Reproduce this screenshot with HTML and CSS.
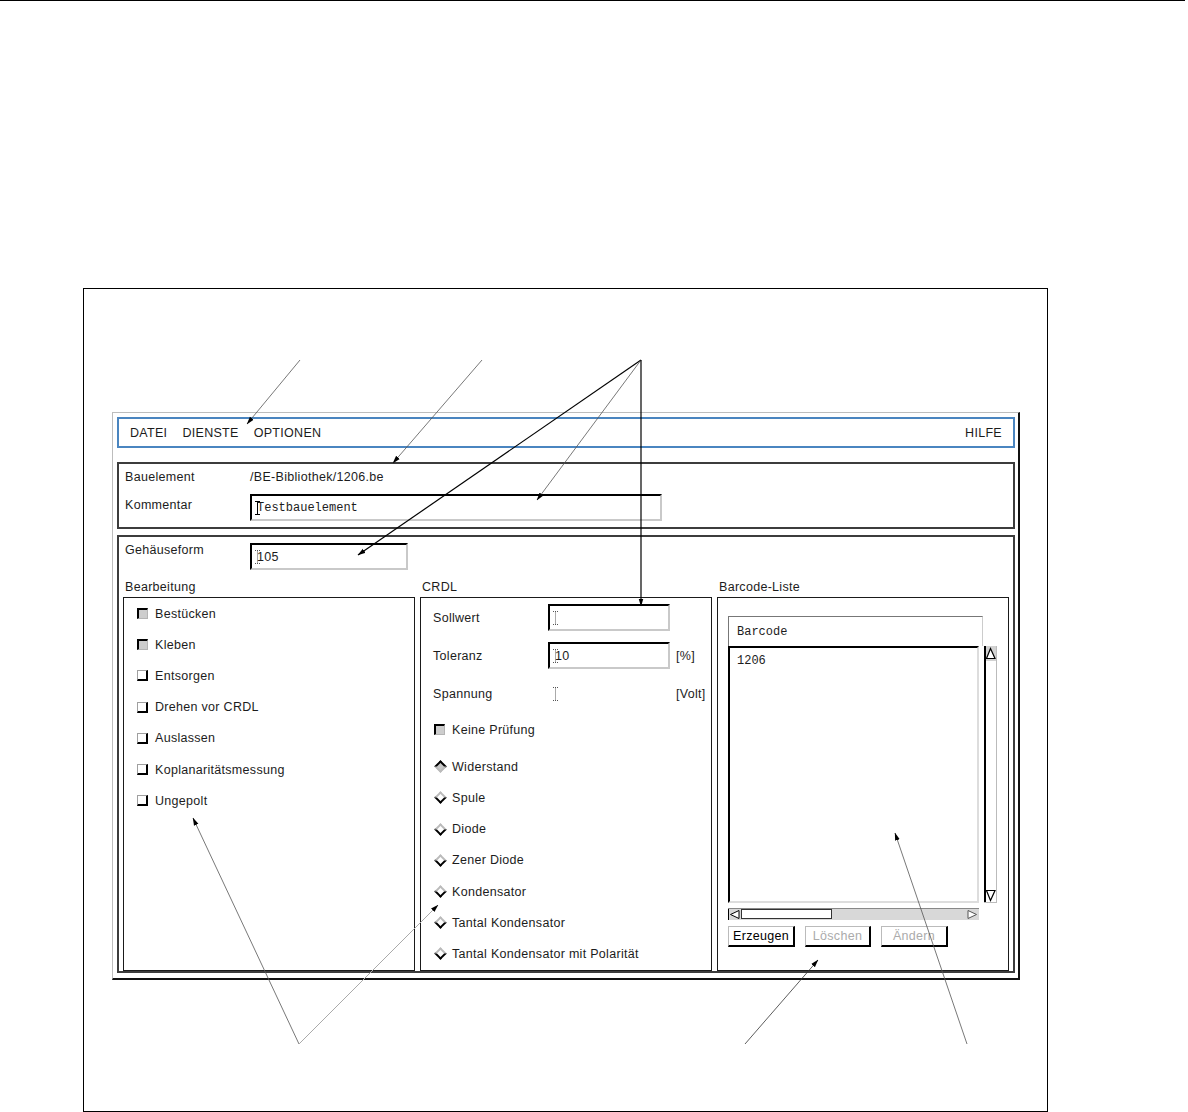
FILE: index.html
```html
<!DOCTYPE html>
<html lang="de">
<head>
  <meta charset="UTF-8" />
  <title>Bauelement bearbeiten</title>
  <link rel="stylesheet" href="styles.css">
</head>
<body>

  <div class="top-rule"></div>

  <div class="figure">
    <div class="window">

      <div class="menubar">
        <span>DATEI</span>
        <span>DIENSTE</span>
        <span>OPTIONEN</span>
        <span class="menu-right">HILFE</span>
      </div>

      <div class="section head">
        <div class="label">Bauelement</div>
        <div class="value">/BE-Bibliothek/1206.be</div>
        <div class="label label-top">Kommentar</div>
        <div class="field field-wide mono">
          <svg class="caret" width="5" height="14" viewBox="0 0 5 14"><path d="M0 0.5H5M2.5 0.5V13.5M0 13.5H5" stroke="#000" stroke-width="1" fill="none"/></svg>Testbauelement
        </div>
      </div>

      <div class="section body">
        <div class="row">
          <div class="label">Gehäuseform</div>
          <div class="field field-short">
            <svg class="caret" width="5" height="14" viewBox="0 0 5 14"><path d="M0 0.5H5M2.5 0.5V13.5M0 13.5H5" stroke="#555" stroke-width="1" stroke-dasharray="1 1" fill="none"/></svg>105
          </div>
        </div>

        <div class="columns">
          <!-- Bearbeitung -->
          <div class="col">
            <div class="col-title">Bearbeitung</div>
            <div class="box">
              <div class="opt"><span class="check on"></span>Bestücken</div>
              <div class="opt"><span class="check on"></span>Kleben</div>
              <div class="opt"><span class="check"></span>Entsorgen</div>
              <div class="opt"><span class="check"></span>Drehen vor CRDL</div>
              <div class="opt"><span class="check"></span>Auslassen</div>
              <div class="opt"><span class="check"></span>Koplanaritätsmessung</div>
              <div class="opt"><span class="check"></span>Ungepolt</div>
            </div>
          </div>

          <!-- CRDL -->
          <div class="col">
            <div class="col-title">CRDL</div>
            <div class="box crdl">
              <div class="crdl-form">
                <div>Sollwert</div>
                <div class="field">
                  <svg class="caret" width="5" height="14" viewBox="0 0 5 14"><path d="M0 0.5H5M2.5 0.5V13.5M0 13.5H5" stroke="#555" stroke-width="1" stroke-dasharray="1 1" fill="none"/></svg>
                </div>
                <div></div>
                <div>Toleranz</div>
                <div class="field">
                  <svg class="caret" width="5" height="14" viewBox="0 0 5 14"><path d="M0 0.5H5M2.5 0.5V13.5M0 13.5H5" stroke="#555" stroke-width="1" stroke-dasharray="1 1" fill="none"/></svg>10
                </div>
                <div>[%]</div>
                <div>Spannung</div>
                <div class="field-bare">
                  <svg class="caret" width="5" height="14" viewBox="0 0 5 14"><path d="M0 0.5H5M2.5 0.5V13.5M0 13.5H5" stroke="#555" stroke-width="1" stroke-dasharray="1 1" fill="none"/></svg>
                </div>
                <div>[Volt]</div>
              </div>
              <div class="opt opt-check"><span class="check on"></span>Keine Prüfung</div>
              <div class="radios">
                <div class="opt opt-radio"><span class="radio on"></span>Widerstand</div>
                <div class="opt opt-radio"><span class="radio"></span>Spule</div>
                <div class="opt opt-radio"><span class="radio"></span>Diode</div>
                <div class="opt opt-radio"><span class="radio"></span>Zener Diode</div>
                <div class="opt opt-radio"><span class="radio"></span>Kondensator</div>
                <div class="opt opt-radio"><span class="radio"></span>Tantal Kondensator</div>
                <div class="opt opt-radio"><span class="radio"></span>Tantal Kondensator mit Polarität</div>
              </div>
            </div>
          </div>

          <!-- Barcode-Liste -->
          <div class="col">
            <div class="col-title">Barcode-Liste</div>
            <div class="box barcode">
              <div class="lb-head mono">Barcode</div>
              <div class="lb-row">
                <div class="lb-list mono">1206</div>
                <svg class="vscroll" width="13" height="257" viewBox="0 0 13 257">
                  <rect x="0" y="0" width="13" height="257" fill="#fff"/>
                  <rect x="0" y="0" width="13" height="15" fill="#d2d2d2"/>
                  <path d="M6.5 2.5 L2.5 12.5 H11 Z" fill="#fff" stroke="#000" stroke-width="1.2"/>
                  <path d="M2.5 244.5 H11 L6.5 254.5 Z" fill="#fff" stroke="#000" stroke-width="1.2"/>
                  <path d="M1 0 V257" stroke="#000" stroke-width="2"/>
                  <path d="M12.5 0 V257 M0 256.5 H13" stroke="#bbb" stroke-width="1"/>
                </svg>
              </div>
              <svg class="hscroll" width="251" height="12" viewBox="0 0 251 12">
                <rect width="251" height="12" fill="#d8d8d8"/>
                <path d="M0 0.5 H251" stroke="#888" stroke-width="1"/>
                <path d="M0.5 1 V12" stroke="#000" stroke-width="1"/>
                <path d="M11 2.5 L2.5 6.5 L11 10.5 Z" fill="#fff" stroke="#000" stroke-width="1"/>
                <rect x="13.5" y="1.5" width="90" height="9" fill="#fff" stroke="#333" stroke-width="1"/>
                <path d="M240 2.5 L248.5 6.5 L240 10.5 Z" fill="#fff" stroke="#555" stroke-width="1"/>
              </svg>
              <div class="buttons">
                <div class="btn btn-a">Erzeugen</div>
                <div class="btn btn-b off">Löschen</div>
                <div class="btn btn-a off">Ändern</div>
              </div>
            </div>
          </div>
        </div>
      </div>

    </div>
  </div>

  <!-- leader lines of the figure -->
  <svg class="leaders" width="1188" height="1112" viewBox="0 0 1188 1112">
    <defs>
      <marker id="ah" markerWidth="8" markerHeight="6" refX="7.5" refY="3" orient="auto" markerUnits="userSpaceOnUse">
        <path d="M0 0.6 L8 3 L0 5.4 Z" fill="#000"/>
      </marker>
    </defs>
    <line class="thin" x1="300" y1="360" x2="247" y2="424" marker-end="url(#ah)"/>
    <line class="thin" x1="482" y1="360" x2="393" y2="463" marker-end="url(#ah)"/>
    <line class="bold" x1="641" y1="360" x2="358" y2="555" marker-end="url(#ah)"/>
    <line class="thin" x1="641" y1="360" x2="537" y2="500" marker-end="url(#ah)"/>
    <line class="bold" x1="641" y1="360" x2="641" y2="606" marker-end="url(#ah)"/>
    <line class="thin" x1="299" y1="1044" x2="193" y2="818" marker-end="url(#ah)"/>
    <line class="faint" x1="299" y1="1044" x2="438" y2="905" marker-end="url(#ah)"/>
    <line class="mid" x1="745" y1="1044" x2="818" y2="960" marker-end="url(#ah)"/>
    <line class="thin" x1="967" y1="1044" x2="895" y2="833" marker-end="url(#ah)"/>
  </svg>

</body>
</html>
```

FILE: styles.css
```css
body {
  margin: 0;
  background: #fff;
  font-family: "Liberation Sans", Arial, sans-serif;
  font-size: 12.5px;
  letter-spacing: 0.3px;
  color: #1c1c1c;
}
.mono {
  font-family: "Liberation Mono", "Courier New", monospace;
  font-size: 12px;
  letter-spacing: 0;
}
.top-rule {
  width: 1185px;
  height: 1px;
  background: #000;
}
.figure {
  box-sizing: border-box;
  width: 965px;
  height: 824px;
  margin: 287px 0 0 83px;
  border: 1px solid #000;
  padding: 123px 0 0 28px;
}
.window {
  box-sizing: border-box;
  width: 908px;
  height: 568px;
  border: 1px solid #bdbdbd;
  border-right: 2px solid #111;
  border-bottom: 2px solid #111;
  padding: 4px 3px 5px 4px;
}
.menubar {
  box-sizing: border-box;
  height: 31px;
  border: 2px solid #4a85c0;
  display: flex;
  align-items: center;
  gap: 15px;
  padding: 0 11px 0 11px;
}
.menu-right {
  margin-left: auto;
}
.section {
  box-sizing: border-box;
  border: 2px solid #3c3c3c;
}
.head {
  margin-top: 14px;
  height: 67px;
  display: grid;
  grid-template-columns: 125px 1fr;
  grid-template-rows: 18px 27px;
  row-gap: 8px;
  padding: 4px 6px 0;
  align-items: center;
}
.label-top {
  align-self: start;
  padding-top: 4px;
}
.field {
  box-sizing: border-box;
  height: 27px;
  border: 2px solid;
  border-color: #000 #c9c9c9 #c9c9c9 #000;
  display: flex;
  align-items: center;
  padding-left: 3px;
  background: #fff;
}
.field-wide {
  width: 412px;
}
.field-short {
  width: 158px;
}
.field-bare {
  display: flex;
  align-items: center;
  padding-left: 5px;
}
.caret {
  display: block;
  margin-right: -3px;
}
.body {
  margin-top: 6px;
  height: 438px;
  padding-top: 6px;
  display: flex;
  flex-direction: column;
}
.row {
  display: grid;
  grid-template-columns: 125px auto;
  height: 27px;
  padding-left: 6px;
}
.columns {
  flex: 1;
  display: grid;
  grid-template-columns: repeat(3, 1fr);
  gap: 5px;
  padding: 0 4px;
  margin-top: 10px;
}
.col {
  display: flex;
  flex-direction: column;
}
.col-title {
  line-height: 15px;
  padding-left: 2px;
  margin-bottom: 2px;
}
.box {
  flex: 1;
  border: 1px solid #1a1a1a;
}
.opt {
  height: 31.2px;
  display: flex;
  align-items: center;
  gap: 7px;
  padding-left: 13px;
}
.check {
  box-sizing: border-box;
  width: 11px;
  height: 11px;
  border-style: solid;
  border-width: 1px 2px 2px 1px;
  border-color: #a0a0a0 #000 #000 #a0a0a0;
  background: #fff;
}
.check.on {
  border-width: 2px 1px 1px 2px;
  border-color: #000 #b4b4b4 #b4b4b4 #000;
  background: #cdcdcd;
}
.radio {
  box-sizing: border-box;
  width: 9px;
  height: 9px;
  margin: 0 2px;
  border: 2px solid;
  border-color: #bbb #000 #000 #bbb;
  background: #fff;
  transform: rotate(45deg);
}
.radio.on {
  border-color: #000 #bbb #bbb #000;
  background: #c8c8c8;
}
.opt-radio {
  gap: 5px;
}
.crdl {
  padding-top: 6px;
}
.crdl-form {
  display: grid;
  grid-template-columns: 109px 122px auto;
  grid-auto-rows: 27px;
  column-gap: 6px;
  row-gap: 11px;
  align-items: center;
  padding-left: 12px;
}
.opt-check {
  margin-top: 7px;
}
.radios {
  margin-top: 6px;
}
.barcode {
  padding: 18px 0 0 10px;
}
.lb-head {
  box-sizing: border-box;
  width: 255px;
  height: 30px;
  border-top: 1px solid #777;
  border-left: 1px solid #777;
  border-right: 1px solid #ccc;
  padding-left: 8px;
  display: flex;
  align-items: center;
}
.lb-row {
  display: flex;
  gap: 5px;
}
.lb-list {
  box-sizing: border-box;
  width: 251px;
  height: 257px;
  border: 2px solid;
  border-color: #000 #ddd #ddd #000;
  padding: 6px 0 0 7px;
  line-height: 15px;
}
.vscroll, .hscroll {
  display: block;
}
.hscroll {
  margin-top: 5px;
}
.buttons {
  display: flex;
  gap: 10px;
  margin-top: 6px;
}
.btn {
  box-sizing: border-box;
  height: 21px;
  border-style: solid;
  border-width: 1px 2px 2px 1px;
  border-color: #bbb #000 #000 #bbb;
  background: #fff;
  display: flex;
  align-items: center;
  justify-content: center;
  color: #000;
}
.btn-a {
  width: 67px;
}
.btn-b {
  width: 66px;
}
.btn.off {
  color: #ababab;
}
.leaders {
  position: absolute;
  top: 0;
  left: 0;
  pointer-events: none;
}
.leaders line {
  fill: none;
}
.leaders .thin {
  stroke: #555;
  stroke-width: 0.8;
}
.leaders .bold {
  stroke: #000;
  stroke-width: 1.2;
}
.leaders .faint {
  stroke: #aaa;
  stroke-width: 1;
}
.leaders .mid {
  stroke: #333;
  stroke-width: 0.8;
}
```
